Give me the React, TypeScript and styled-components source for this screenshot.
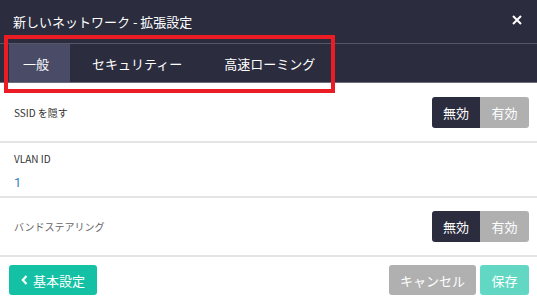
import styled, { createGlobalStyle } from "styled-components";

const GlobalStyle = createGlobalStyle`
  html, body { margin: 0; padding: 0; background: #fff; }
  body { font-family: "Noto Sans CJK JP", "Noto Sans", sans-serif; }
  * { box-sizing: border-box; }
`;

const Modal = styled.div`
  position: relative;
  width: 537px;
  height: 305px;
  display: flex;
  flex-direction: column;
  background: #fff;
  overflow: hidden;
`;

const Header = styled.div`
  height: 44px;
  display: flex;
  align-items: center;
  justify-content: space-between;
  padding: 0 14px 0 13px;
  background: #2b2c3e;
  border-bottom: 1px solid #56586a;
  color: #fff;
  font-size: 13px;
`;

const Close = styled.button`
  border: 0;
  background: none;
  padding: 0;
  width: 12px;
  height: 12px;
  display: flex;
  align-items: center;
  justify-content: center;
  cursor: pointer;
  margin-top: -4px;
`;

const TabBar = styled.div`
  height: 39px;
  display: flex;
  align-items: stretch;
  padding-left: 9px;
  background: #2b2c3e;
  border-bottom: 1px solid #6c6e7c;
`;

const Tab = styled.div<{ $active?: boolean }>`
  display: flex;
  align-items: center;
  padding: 0 ${(p) => (p.$active ? "21px" : "18px")} 0 ${(p) => (p.$active ? "14px" : "22px")};
  margin-right: ${(p) => (p.$active ? "0" : "2px")};
  background: ${(p) => (p.$active ? "#4a4c67" : "transparent")};
  color: #fff;
  font-size: 13px;
`;

const Highlight = styled.div`
  position: absolute;
  left: 4px;
  top: 35px;
  width: 331px;
  height: 58px;
  border: 4px solid #ec1c24;
  pointer-events: none;
`;

const Row = styled.div<{ $h: number }>`
  height: ${(p) => p.$h}px;
  display: flex;
  align-items: center;
  justify-content: space-between;
  padding: 0 8px 0 14px;
  border-bottom: 2px solid #e4e4e4;
`;

const Label = styled.div<{ $muted?: boolean }>`
  font-size: 10px;
  color: ${(p) => (p.$muted ? "#666" : "#333")};
`;

const Stack = styled.div`
  display: flex;
  flex-direction: column;
  gap: 9px;
  padding-top: 1px;
`;

const Value = styled.div`
  font-size: 13px;
  color: #3b7fc4;
  font-family: "Roboto", sans-serif;
`;

const Toggle = styled.div`
  display: flex;
  height: 31px;
  border-radius: 3px;
  overflow: hidden;
`;

const ToggleOpt = styled.div<{ $on?: boolean }>`
  width: 48px;
  display: flex;
  align-items: center;
  justify-content: center;
  font-size: 13px;
  color: #fff;
  background: ${(p) => (p.$on ? "#2b2c3e" : "#b0b0b0")};
  & + & { width: 49px; }
`;

const Footer = styled.div`
  flex: 1;
  display: flex;
  align-items: center;
  justify-content: space-between;
  padding: 0 8px 2px 9px;
`;

const Actions = styled.div`
  display: flex;
  gap: 4px;
`;

const Button = styled.button<{ $bg: string; $w: number }>`
  height: 30px;
  width: ${(p) => p.$w}px;
  border: 0;
  border-radius: 3px;
  background: ${(p) => p.$bg};
  color: #fff;
  font-family: inherit;
  font-size: 13px;
  display: flex;
  align-items: center;
  justify-content: center;
  gap: 5px;
  padding: 0;
`;

export default function App() {
  return (
    <>
      <GlobalStyle />
      <Modal>
        <Header>
          <span>新しいネットワーク - 拡張設定</span>
          <Close aria-label="close">
            <svg width="10" height="10" viewBox="0 0 10 10">
              <path d="M1 1L9 9M9 1L1 9" stroke="#fff" strokeWidth="2" />
            </svg>
          </Close>
        </Header>
        <TabBar>
          <Tab $active>一般</Tab>
          <Tab>セキュリティー</Tab>
          <Tab>高速ローミング</Tab>
        </TabBar>
        <Row $h={60}>
          <Label>SSID を隠す</Label>
          <Toggle>
            <ToggleOpt $on>無効</ToggleOpt>
            <ToggleOpt>有効</ToggleOpt>
          </Toggle>
        </Row>
        <Row $h={55}>
          <Stack>
            <Label>VLAN ID</Label>
            <Value>1</Value>
          </Stack>
        </Row>
        <Row $h={59}>
          <Label $muted>バンドステアリング</Label>
          <Toggle>
            <ToggleOpt $on>無効</ToggleOpt>
            <ToggleOpt>有効</ToggleOpt>
          </Toggle>
        </Row>
        <Footer>
          <Button $bg="#15c1a4" $w={88}>
            <svg width="7" height="10" viewBox="0 0 7 10">
              <path d="M5.5 1L1.8 5L5.5 9" stroke="#fff" strokeWidth="2.2" fill="none" />
            </svg>
            基本設定
          </Button>
          <Actions>
            <Button $bg="#b0b0b0" $w={87}>キャンセル</Button>
            <Button $bg="#62d8c4" $w={49}>保存</Button>
          </Actions>
        </Footer>
        <Highlight />
      </Modal>
    </>
  );
}
